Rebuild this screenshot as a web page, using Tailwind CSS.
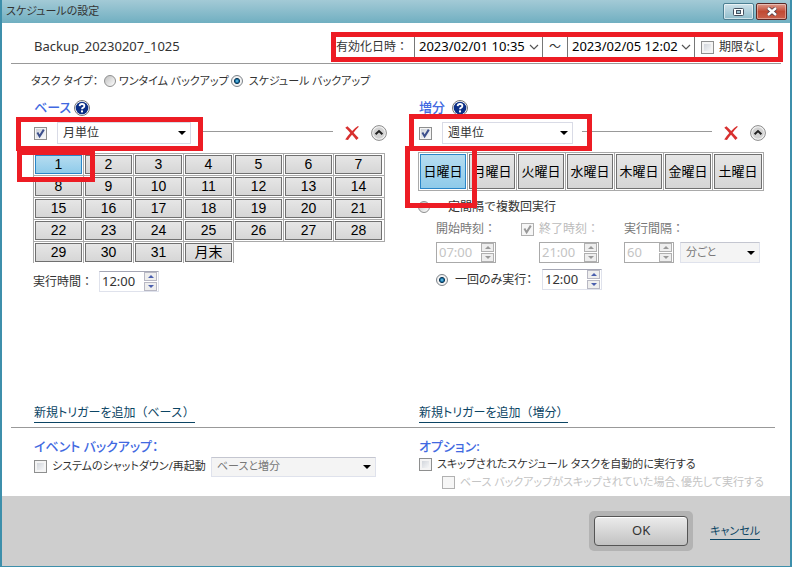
<!DOCTYPE html>
<html lang="ja">
  <head>
    <meta charset="UTF-8" />
    <meta name="viewport" content="width=device-width, initial-scale=1.0" />
    <title>スケジュールの設定</title>
    <script src="https://cdn.jsdelivr.net/npm/@tailwindcss/browser@4"></script>
  </head>
  <body
    class="flex min-h-screen flex-col border-x-2 border-b border-[#3d8fab] bg-white font-['Noto_Sans','Noto_Sans_CJK_JP',sans-serif] text-[12px] text-[#333]"
  >
    <!-- Shared icons -->
    <svg class="hidden">
      <symbol id="tick" viewBox="0 0 13 13">
        <path d="M3.4 5.6 L5.6 9.4 L9.8 2.6" fill="none" stroke="currentColor" stroke-width="2" />
      </symbol>
      <symbol id="help" viewBox="0 0 16 16">
        <circle cx="8" cy="8" r="7.5" fill="#fff" stroke="#777" />
        <circle cx="8" cy="8" r="6.3" fill="#0b2f86" />
        <path d="M5.6 6.2 Q5.8 4 8 4 Q10.4 4 10.4 6 Q10.4 7.2 8.9 7.9 Q8 8.3 8 9.3" fill="none" stroke="#fff" stroke-width="1.8" />
        <rect x="7" y="10.4" width="2" height="2" fill="#fff" />
      </symbol>
      <symbol id="remove" viewBox="0 0 14 14">
        <path d="M0.3 1.8 L2.4 0.2 Q5 2.6 7.2 5 Q9.6 2 13 0 L13.8 0.8 Q10.8 3.6 8.6 6.8 Q11 9.4 13.6 12 L11.4 13.9 Q9.2 11.2 7 8.8 Q4.8 11.2 3 14 L0.2 13.4 Q2.6 9.8 5.3 6.9 Q3 4.2 0.3 1.8 Z" fill="#d8302f" />
      </symbol>
      <symbol id="collapse" viewBox="0 0 16 16">
        <circle cx="8" cy="8" r="7.4" fill="#f4f4f4" stroke="#8a8a8a" />
        <circle cx="8" cy="8" r="5.8" fill="#d2d2d2" />
        <path d="M4.6 9.2 L8 6 L11.4 9.2" fill="none" stroke="#222" stroke-width="2" />
      </symbol>
      <symbol id="arrow" viewBox="0 0 8 4">
        <path d="M0 0 H8 L4 4 Z" fill="currentColor" />
      </symbol>
      <symbol id="chevron" viewBox="0 0 10 6">
        <path d="M1 1 L5 5 L9 1" fill="none" stroke="#555" stroke-width="1.2" />
      </symbol>
      <symbol id="up" viewBox="0 0 6 3"><path d="M0 3 H6 L3 0 Z" fill="currentColor" /></symbol>
      <symbol id="down" viewBox="0 0 6 3"><path d="M0 0 H6 L3 3 Z" fill="currentColor" /></symbol>
    </svg>

    <!-- Title bar -->
    <header
      class="-mx-[2px] flex h-[23px] shrink-0 items-center bg-linear-to-b from-[#a3cad6] to-[#70afc1] pr-[5px] pl-[6px]"
    >
      <h1 class="text-[11px] [font-feature-settings:'palt']">スケジュールの設定</h1>
      <div class="ml-auto flex gap-[2px]">
        <button
          type="button"
          aria-label="最大化"
          class="grid h-[17px] w-[31px] place-items-center rounded-[2px] border border-[#4c7f92] bg-linear-to-b from-[#cfe2ea] to-[#8fbccb] shadow-[inset_0_0_0_1px_#ffffff90]"
        >
          <svg class="h-[8px] w-[11px]" viewBox="0 0 11 8">
            <rect x="0.5" y="0.5" width="10" height="7" rx="1" fill="#fff" stroke="#44505f" />
            <rect x="3.5" y="2.5" width="4" height="3" fill="#9fc6d4" stroke="#44505f" />
          </svg>
        </button>
        <button
          type="button"
          aria-label="閉じる"
          class="grid h-[17px] w-[31px] place-items-center rounded-[2px] border border-[#5a2a27] bg-linear-to-b from-[#dc9a8c] via-[#c14a33] to-[#c8604a] shadow-[inset_0_0_0_1px_#ffffff60]"
        >
          <svg class="h-[9px] w-[12px]" viewBox="0 0 12 9">
            <path d="M2 1 L10 8 M10 1 L2 8" stroke="#4d3b44" stroke-width="4" />
            <path d="M2 1 L10 8 M10 1 L2 8" stroke="#fff" stroke-width="2.4" />
          </svg>
        </button>
      </div>
    </header>

    <!-- Name and active period -->
    <div class="mx-[9px] flex h-[41px] items-center border-b border-[#999] pt-[8px] pl-[23px]">
      <span class="text-[13px]">Backup_20230207_1025</span>
      <div class="relative -mr-[2px] ml-auto flex h-[30px] items-center pr-[20px] pl-[5px]">
        <label for="start">有効化日時：</label>
        <span class="ml-[6px] grid items-center">
          <select
            id="start"
            class="col-start-1 row-start-1 h-[22px] w-[129px] appearance-none border border-[#777] bg-white pl-[4px] text-[13px] text-black"
          >
            <option>2023/02/01 10:35</option>
          </select>
          <svg class="pointer-events-none col-start-1 row-start-1 mr-[4px] h-[6px] w-[10px] justify-self-end"><use href="#chevron" /></svg>
        </span>
        <label for="end" class="w-[24px] text-center">～</label>
        <span class="grid items-center">
          <select
            id="end"
            class="col-start-1 row-start-1 h-[22px] w-[128px] appearance-none border border-[#777] bg-white pl-[4px] text-[13px] text-black"
          >
            <option>2023/02/05 12:02</option>
          </select>
          <svg class="pointer-events-none col-start-1 row-start-1 mr-[4px] h-[6px] w-[10px] justify-self-end"><use href="#chevron" /></svg>
        </span>
        <input
          id="no-limit"
          type="checkbox"
          class="ml-[6px] size-[13px] appearance-none border border-[#8e8f8f] bg-linear-to-br from-[#c8cdd4] to-white shadow-[inset_0_0_0_2px_#f4f4f4]"
        />
        <label for="no-limit" class="ml-[5px] w-[44px] whitespace-nowrap [font-feature-settings:'palt']">期限なし</label>
        <div class="pointer-events-none absolute inset-0 border-5 border-[#ed1c24]"></div>
      </div>
    </div>

    <!-- Task type -->
    <div class="flex h-[34px] items-center pl-[29px] text-[11px] [font-feature-settings:'palt']">
      <span class="w-[73px] shrink-0">タスク タイプ：</span>
      <input
        id="one-time"
        type="radio"
        name="task"
        class="size-[12px] shrink-0 appearance-none rounded-full border border-[#8e8f8f] bg-linear-to-br from-[#c0c0c0] to-white"
      />
      <label for="one-time" class="mr-[2px] ml-[3px] whitespace-nowrap">ワンタイム バックアップ</label>
      <input
        id="scheduled"
        type="radio"
        name="task"
        checked
        class="size-[12px] shrink-0 appearance-none rounded-full border border-[#7c8288] bg-[radial-gradient(circle_at_50%_50%,#8fd8f4_0,#1d7fb4_20%,#0d3350_38%,#f2f2f2_46%)]"
      />
      <label for="scheduled" class="ml-[6px]">スケジュール バックアップ</label>
    </div>

    <main class="grid grow grid-cols-2 gap-x-[33px] pr-[20px] pl-[31px]">
      <!-- Base -->
      <section>
        <div class="flex h-[20px] items-center gap-[3px] pl-[1px]">
          <h2 class="text-[13px] font-medium text-[#4169e1] [font-feature-settings:'palt']">ベース</h2>
          <svg class="size-[16px]"><use href="#help" /></svg>
        </div>
        <div class="relative -mr-[2px] flex h-[30px] items-center pl-[1px]">
          <span class="grid">
            <input
              type="checkbox"
              checked
              aria-label="ベース"
              class="col-start-1 row-start-1 size-[13px] appearance-none border border-[#8e8f8f] bg-linear-to-br from-[#c8cdd4] to-white shadow-[inset_0_0_0_1px_#f4f4f4]"
            />
            <svg class="pointer-events-none col-start-1 row-start-1 size-[13px] text-[#3c4f8c]"><use href="#tick" /></svg>
          </span>
          <span class="ml-[10px] grid items-center">
            <select
              aria-label="ベースの単位"
              class="col-start-1 row-start-1 h-[22px] w-[134px] appearance-none border border-[#d9dbe6] bg-white pl-[5px] text-[12px]"
            >
              <option>月単位</option>
            </select>
            <svg class="pointer-events-none col-start-1 row-start-1 mr-[5px] h-[4px] w-[8px] justify-self-end text-black"><use href="#arrow" /></svg>
          </span>
          <span class="mr-[12px] mb-[3px] ml-[9px] h-[1px] grow bg-[#999]"></span>
          <button type="button" aria-label="削除" class="mr-[12px]">
            <svg class="size-[14px]"><use href="#remove" /></svg>
          </button>
          <button type="button" aria-label="折りたたむ">
            <svg class="size-[16px]"><use href="#collapse" /></svg>
          </button>
          <div class="pointer-events-none absolute top-[-1px] -left-[17px] h-[34px] w-[187px] border-5 border-[#ed1c24]"></div>
        </div>
        <div class="relative mt-[5px]">
          <div id="month" class="grid w-[352px] grid-cols-[repeat(6,50px)_52px] auto-rows-[22px]"></div>
          <div class="pointer-events-none absolute -top-[3px] -left-[16px] h-[32px] w-[78px] border-5 border-[#ed1c24]"></div>
        </div>
        <div class="mt-[8px] flex items-center">
          <label for="base-time" class="w-[66px]">実行時間：</label>
          <div class="flex h-[21px] w-[60px] items-center border border-[#dfe2ec] border-t-[#a5a7b5] pr-px">
            <input id="base-time" type="text" value="12:00" class="w-0 grow pl-[2px] text-[13px] outline-none" />
            <div class="flex flex-col gap-px text-[#4a5fae]">
              <button type="button" aria-label="増やす" class="grid h-[9px] w-[13px] place-items-center border border-[#b8b8c4] bg-[#eee]">
                <svg class="h-[3px] w-[6px]"><use href="#up" /></svg>
              </button>
              <button type="button" aria-label="減らす" class="grid h-[9px] w-[13px] place-items-center border border-[#b8b8c4] bg-[#eee]">
                <svg class="h-[3px] w-[6px]"><use href="#down" /></svg>
              </button>
            </div>
          </div>
        </div>
      </section>

      <!-- Incremental -->
      <section>
        <div class="flex h-[20px] items-center gap-[7px] pl-[1px]">
          <h2 class="text-[13px] font-medium text-[#4169e1]">増分</h2>
          <svg class="size-[16px]"><use href="#help" /></svg>
        </div>
        <div class="relative flex h-[30px] items-center pl-[1px]">
          <span class="grid">
            <input
              type="checkbox"
              checked
              aria-label="増分"
              class="col-start-1 row-start-1 size-[13px] appearance-none border border-[#8e8f8f] bg-linear-to-br from-[#c8cdd4] to-white shadow-[inset_0_0_0_1px_#f4f4f4]"
            />
            <svg class="pointer-events-none col-start-1 row-start-1 size-[13px] text-[#3c4f8c]"><use href="#tick" /></svg>
          </span>
          <span class="ml-[10px] grid items-center">
            <select
              aria-label="増分の単位"
              class="col-start-1 row-start-1 h-[22px] w-[131px] appearance-none border border-[#d9dbe6] bg-white pl-[5px] text-[12px]"
            >
              <option>週単位</option>
            </select>
            <svg class="pointer-events-none col-start-1 row-start-1 mr-[5px] h-[4px] w-[8px] justify-self-end text-black"><use href="#arrow" /></svg>
          </span>
          <span class="mr-[12px] mb-[3px] ml-[9px] h-[1px] grow bg-[#999]"></span>
          <button type="button" aria-label="削除" class="mr-[12px]">
            <svg class="size-[14px]"><use href="#remove" /></svg>
          </button>
          <button type="button" aria-label="折りたたむ" class="mr-[4px]">
            <svg class="size-[16px]"><use href="#collapse" /></svg>
          </button>
          <div class="pointer-events-none absolute -top-[4px] -left-[9px] h-[37px] w-[183px] border-5 border-[#ed1c24]"></div>
        </div>
        <div class="relative mt-[4px]">
          <div id="week" class="grid w-[346px] grid-cols-[repeat(6,49px)_52px] border-b border-[#a9a9a9]"></div>
          <div class="pointer-events-none absolute -top-[6px] -left-[13px] h-[62px] w-[72px] border-5 border-[#ed1c24]"></div>
        </div>

        <div class="mt-[5px] flex h-[22px] items-center">
          <input
            id="repeat"
            type="radio"
            name="run"
            class="size-[12px] appearance-none rounded-full border border-[#8e8f8f] bg-linear-to-br from-[#c0c0c0] to-white"
          />
          <label for="repeat" class="ml-[6px]">一定間隔で複数回実行</label>
        </div>
        <div class="grid grid-cols-[85px_103px_1fr] pl-[18px] text-[#777]">
          <label for="from" class="leading-[22px]">開始時刻：</label>
          <div class="flex items-center text-[#bbb]">
            <span class="mr-[5px] grid">
              <input
                id="use-to"
                type="checkbox"
                checked
                disabled
                class="col-start-1 row-start-1 size-[13px] appearance-none border border-[#b1b1b1] bg-[#f6f6f6]"
              />
              <svg class="pointer-events-none col-start-1 row-start-1 size-[13px] text-[#999]"><use href="#tick" /></svg>
            </span>
            <label for="use-to">終了時刻：</label>
          </div>
          <label for="every" class="leading-[22px]">実行間隔：</label>

          <div class="mt-[2px] flex h-[21px] w-[60px] items-center border border-[#aaa] pr-px">
            <input id="from" type="text" value="07:00" disabled class="w-0 grow pl-[2px] text-[13px] text-[#c4c4c4]" />
            <div class="flex flex-col gap-px text-[#999]">
              <button type="button" disabled aria-label="増やす" class="grid h-[9px] w-[13px] place-items-center border border-[#b0b0b0] bg-[#eee]">
                <svg class="h-[3px] w-[6px]"><use href="#up" /></svg>
              </button>
              <button type="button" disabled aria-label="減らす" class="grid h-[9px] w-[13px] place-items-center border border-[#b0b0b0] bg-[#eee]">
                <svg class="h-[3px] w-[6px]"><use href="#down" /></svg>
              </button>
            </div>
          </div>
          <div class="mt-[2px] ml-[18px] flex h-[21px] w-[60px] items-center border border-[#aaa] pr-px">
            <input type="text" value="21:00" disabled aria-label="終了時刻" class="w-0 grow pl-[2px] text-[13px] text-[#c4c4c4]" />
            <div class="flex flex-col gap-px text-[#999]">
              <button type="button" disabled aria-label="増やす" class="grid h-[9px] w-[13px] place-items-center border border-[#b0b0b0] bg-[#eee]">
                <svg class="h-[3px] w-[6px]"><use href="#up" /></svg>
              </button>
              <button type="button" disabled aria-label="減らす" class="grid h-[9px] w-[13px] place-items-center border border-[#b0b0b0] bg-[#eee]">
                <svg class="h-[3px] w-[6px]"><use href="#down" /></svg>
              </button>
            </div>
          </div>
          <div class="mt-[2px] flex gap-[6px]">
            <div class="flex h-[21px] w-[50px] items-center border border-[#aaa] pr-px">
              <input id="every" type="text" value="60" disabled class="w-0 grow pl-[2px] text-[13px] text-[#c4c4c4]" />
              <div class="flex flex-col gap-px text-[#999]">
                <button type="button" disabled aria-label="増やす" class="grid h-[9px] w-[13px] place-items-center border border-[#b0b0b0] bg-[#eee]">
                  <svg class="h-[3px] w-[6px]"><use href="#up" /></svg>
                </button>
                <button type="button" disabled aria-label="減らす" class="grid h-[9px] w-[13px] place-items-center border border-[#b0b0b0] bg-[#eee]">
                  <svg class="h-[3px] w-[6px]"><use href="#down" /></svg>
                </button>
              </div>
            </div>
            <span class="grid items-center">
              <select
                disabled
                aria-label="間隔の単位"
                class="col-start-1 row-start-1 h-[21px] w-[80px] appearance-none border border-[#dfe2ec] border-t-[#c4c6d0] bg-[#f4f4f4] pl-[5px] text-[11px] text-[#777] opacity-100 [font-feature-settings:'palt']"
              >
                <option>分ごと</option>
              </select>
              <svg class="pointer-events-none col-start-1 row-start-1 mr-[5px] h-[4px] w-[8px] justify-self-end text-black"><use href="#arrow" /></svg>
            </span>
          </div>
        </div>
        <div class="mt-[6px] flex items-center pl-[18px]">
          <input
            id="once"
            type="radio"
            name="run"
            checked
            class="size-[12px] appearance-none rounded-full border border-[#7c8288] bg-[radial-gradient(circle_at_50%_50%,#8fd8f4_0,#1d7fb4_20%,#0d3350_38%,#f2f2f2_46%)]"
          />
          <label for="once" class="ml-[7px] w-[87px] whitespace-nowrap [font-feature-settings:'palt']">一回のみ実行：</label>
          <div class="flex h-[21px] w-[60px] items-center border border-[#dfe2ec] border-t-[#a5a7b5] pr-px">
            <input type="text" value="12:00" aria-label="実行時刻" class="w-0 grow pl-[2px] text-[13px] outline-none" />
            <div class="flex flex-col gap-px text-[#4a5fae]">
              <button type="button" aria-label="増やす" class="grid h-[9px] w-[13px] place-items-center border border-[#b8b8c4] bg-[#eee]">
                <svg class="h-[3px] w-[6px]"><use href="#up" /></svg>
              </button>
              <button type="button" aria-label="減らす" class="grid h-[9px] w-[13px] place-items-center border border-[#b8b8c4] bg-[#eee]">
                <svg class="h-[3px] w-[6px]"><use href="#down" /></svg>
              </button>
            </div>
          </div>
        </div>
      </section>
    </main>

    <!-- Add trigger -->
    <div class="grid grid-cols-2 gap-x-[33px] pr-[20px] pb-[4px] pl-[31px]">
      <div class="pl-[1px]">
        <a href="#" class="inline-block border-b border-[#0c4564] align-top text-[12px] leading-[18px] text-[#0c4564]"
          ><span class="[font-feature-settings:'palt']">新規トリガーを追加</span>（ベース）</a
        >
      </div>
      <div class="pl-[1px]">
        <a href="#" class="inline-block border-b border-[#0c4564] align-top text-[12px] leading-[18px] text-[#0c4564]"
          ><span class="[font-feature-settings:'palt']">新規トリガーを追加</span>（増分）</a
        >
      </div>
    </div>
    <hr class="mr-[15px] ml-[9px] border-[#999]" />

    <!-- Event backup and options -->
    <div class="grid grid-cols-2 gap-x-[33px] pt-[8px] pr-[20px] pb-[5px] pl-[31px] [font-feature-settings:'palt']">
      <section class="pl-[1px]">
        <h2 class="text-[13px] leading-[20px] font-medium text-[#4169e1]">イベント バックアップ：</h2>
        <div class="flex h-[21px] items-center">
          <input
            id="shutdown"
            type="checkbox"
            class="size-[13px] shrink-0 appearance-none border border-[#8e8f8f] bg-linear-to-br from-[#c8cdd4] to-white shadow-[inset_0_0_0_2px_#f4f4f4]"
          />
          <label for="shutdown" class="ml-[5px] w-[159px] text-[11px] whitespace-nowrap">システムのシャットダウン/再起動</label>
          <span class="grid items-center">
            <select
              disabled
              aria-label="バックアップの種類"
              class="col-start-1 row-start-1 h-[20px] w-[165px] appearance-none border border-[#dfe2ec] border-t-[#c4c6d0] bg-[#f4f4f4] pl-[5px] text-[11px] text-[#777] opacity-100"
            >
              <option>ベースと増分</option>
            </select>
            <svg class="pointer-events-none col-start-1 row-start-1 mr-[5px] h-[4px] w-[8px] justify-self-end text-black"><use href="#arrow" /></svg>
          </span>
        </div>
      </section>
      <section class="pl-[1px]">
        <h2 class="text-[13px] leading-[20px] font-medium text-[#4169e1]">オプション:</h2>
        <div class="flex h-[17px] items-center">
          <input
            id="run-skipped"
            type="checkbox"
            class="size-[13px] shrink-0 appearance-none border border-[#8e8f8f] bg-linear-to-br from-[#c8cdd4] to-white shadow-[inset_0_0_0_2px_#f4f4f4]"
          />
          <label for="run-skipped" class="ml-[5px] text-[11px] whitespace-nowrap">スキップされたスケジュール タスクを自動的に実行する</label>
        </div>
        <div class="flex h-[18px] items-center pl-[23px]">
          <input id="base-first" type="checkbox" disabled class="size-[13px] shrink-0 appearance-none border border-[#b1b1b1] bg-[#f6f6f6]" />
          <label for="base-first" class="ml-[5px] text-[11px] whitespace-nowrap text-[#c4c4c4]">ベース バックアップがスキップされていた場合、優先して実行する</label>
        </div>
      </section>
    </div>

    <!-- Footer -->
    <footer class="flex h-[70px] shrink-0 items-center justify-end gap-[17px] bg-[#cecece] pr-[30px]">
      <div class="rounded-[5px] bg-[#b3b3b3] p-[5px]">
        <button
          type="button"
          class="block h-[30px] w-[94px] rounded-[4px] border border-[#555] bg-linear-to-b from-[#ececec] to-[#c2c2c2] text-[13px] shadow-[inset_0_1px_0_#fff]"
        >
          OK
        </button>
      </div>
      <a href="#" class="border-b border-[#0c4564] text-[11px] leading-[16px] text-[#0c4564] [font-feature-settings:'palt']">キャンセル</a>
    </footer>

    <script>
      // Days of the month, followed by the "end of month" button
      const month = document.getElementById("month");
      const labels = [...Array(31).keys()].map((d) => d + 1).concat("月末");
      for (let i = 0; i < 35; i++) {
        const cell = document.createElement("div");
        cell.className = "border-t border-[#a9a9a9] pt-px";
        if (i <= labels.length) cell.classList.add("border-l", "pl-px");
        if (i < 28 && i % 7 === 6) cell.classList.add("border-r");
        if (i < labels.length) {
          const button = document.createElement("button");
          button.type = "button";
          button.textContent = labels[i];
          button.className =
            i === 0
              ? "block h-[19px] w-[47px] border border-[#2a86c8] bg-linear-to-b from-[#b5dcf0] to-[#8fcbea] font-['Liberation_Sans','Noto_Sans_CJK_JP',sans-serif] text-[14px] leading-[17px] text-black"
              : "block h-[19px] w-[47px] border border-[#707070] bg-linear-to-b from-[#e6e6e6] to-[#d6d6d6] font-['Liberation_Sans','Noto_Sans_CJK_JP',sans-serif] text-[14px] leading-[17px] text-black";
          cell.appendChild(button);
        }
        month.appendChild(cell);
      }

      // Days of the week
      const week = document.getElementById("week");
      ["日", "月", "火", "水", "木", "金", "土"].forEach((day, i) => {
        const cell = document.createElement("div");
        cell.className = "border-t border-l border-[#a9a9a9] p-px";
        if (i === 6) cell.classList.add("border-r");
        const button = document.createElement("button");
        button.type = "button";
        button.textContent = day + "曜日";
        button.className =
          i === 0
            ? "block h-[35px] w-full border border-[#2a86c8] bg-linear-to-b from-[#b5dcf0] to-[#8fcbea] text-[13px] whitespace-nowrap text-black"
            : "block h-[35px] w-full border border-[#707070] bg-linear-to-b from-[#e6e6e6] to-[#d6d6d6] text-[13px] whitespace-nowrap text-black";
        week.appendChild(cell).appendChild(button);
      });
    </script>
  </body>
</html>
